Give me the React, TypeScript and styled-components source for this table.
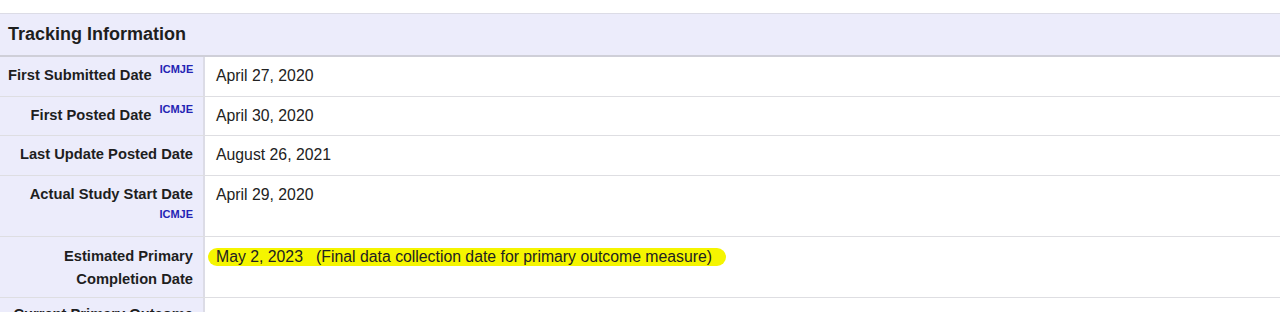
import React from 'react'
import styled, { createGlobalStyle } from 'styled-components'

const GlobalStyle = createGlobalStyle`
  body {
    margin: 0;
    background: #fff;
    font-family: 'Liberation Sans', Arial, sans-serif;
    color: #222;
  }
`

const Page = styled.div`
  padding-top: 13px;
  height: 312px;
  overflow: hidden;
  box-sizing: border-box;
`

const Section = styled.div`
  display: flex;
  flex-direction: column;
`

const Header = styled.div`
  height: 44px;
  display: flex;
  align-items: center;
  padding-left: 8px;
  background: #ececfb;
  border-top: 1px solid #dcdce6;
  border-bottom: 2px solid #cfcfd8;
  font-size: 18px;
  font-weight: bold;
  color: #1e1e1e;
  box-sizing: border-box;
`

const DataRow = styled.div`
  display: grid;
  grid-template-columns: 205px 1fr;
  border-bottom: 1px solid #dedee2;
`

const Label = styled.div<{ $padTop: number; $padBottom: number }>`
  background: #ececfb;
  border-right: 2px solid #dcdce6;
  padding: ${({ $padTop, $padBottom }) => `${$padTop}px 10px ${$padBottom}px 8px`};
  text-align: right;
  font-size: 14.7px;
  font-weight: bold;
  line-height: 22.5px;
  color: #1e1e1e;
`

const LabelLine = styled.div`
  white-space: nowrap;
`

const Sup = styled.span`
  font-size: 11px;
  color: #2323b4;
  vertical-align: 7px;
  margin-left: 8px;
  line-height: 0;
`

const Below = styled.div`
  font-size: 11px;
  color: #2323b4;
  line-height: 18px;
  margin-bottom: 3.5px;
`

const Value = styled.div<{ $padTop: number }>`
  padding: ${({ $padTop }) => $padTop + 1}px 10px 8px 11px;
  font-size: 15.8px;
  line-height: 22.5px;
  color: #222;
`

const Highlight = styled.span`
  background: #f5f500;
  border-radius: 10px;
  padding: 0 14px 1px 8px;
  margin-left: -8px;
`

type Row = {
  label: string[]
  icmje?: 'inline' | 'below'
  padTop?: number
  padBottom?: number
  value: React.ReactNode
}

const rows: Row[] = [
  { label: ['First Submitted Date'], icmje: 'inline', value: 'April 27, 2020' },
  { label: ['First Posted Date'], icmje: 'inline', value: 'April 30, 2020' },
  { label: ['Last Update Posted Date'], value: 'August 26, 2021' },
  { label: ['Actual Study Start Date'], icmje: 'below', value: 'April 29, 2020' },
  {
    label: ['Estimated Primary', 'Completion Date'],
    padTop: 8.5,
    padBottom: 6.5,
    value: (
      <Highlight>May 2, 2023&nbsp;&nbsp;&nbsp;(Final data collection date for primary outcome measure)</Highlight>
    ),
  },
  { label: ['Current Primary Outcome', 'Measures'], icmje: 'inline', padTop: 5, value: '' },
]

const App = () => {
  return (
    <Page>
      <GlobalStyle />
      <Section>
        <Header>Tracking Information</Header>
        {rows.map((r, i) => {
          const pad = r.padTop ?? 7
          return (
            <DataRow key={i}>
              <Label $padTop={pad} $padBottom={r.padBottom ?? 9}>
                {r.label.map((l, j) => (
                  <LabelLine key={j}>
                    {l}
                    {r.icmje === 'inline' && j === r.label.length - 1 && <Sup>ICMJE</Sup>}
                  </LabelLine>
                ))}
                {r.icmje === 'below' && <Below>ICMJE</Below>}
              </Label>
              <Value $padTop={pad}>{r.value}</Value>
            </DataRow>
          )
        })}
      </Section>
    </Page>
  )
}

export default App
